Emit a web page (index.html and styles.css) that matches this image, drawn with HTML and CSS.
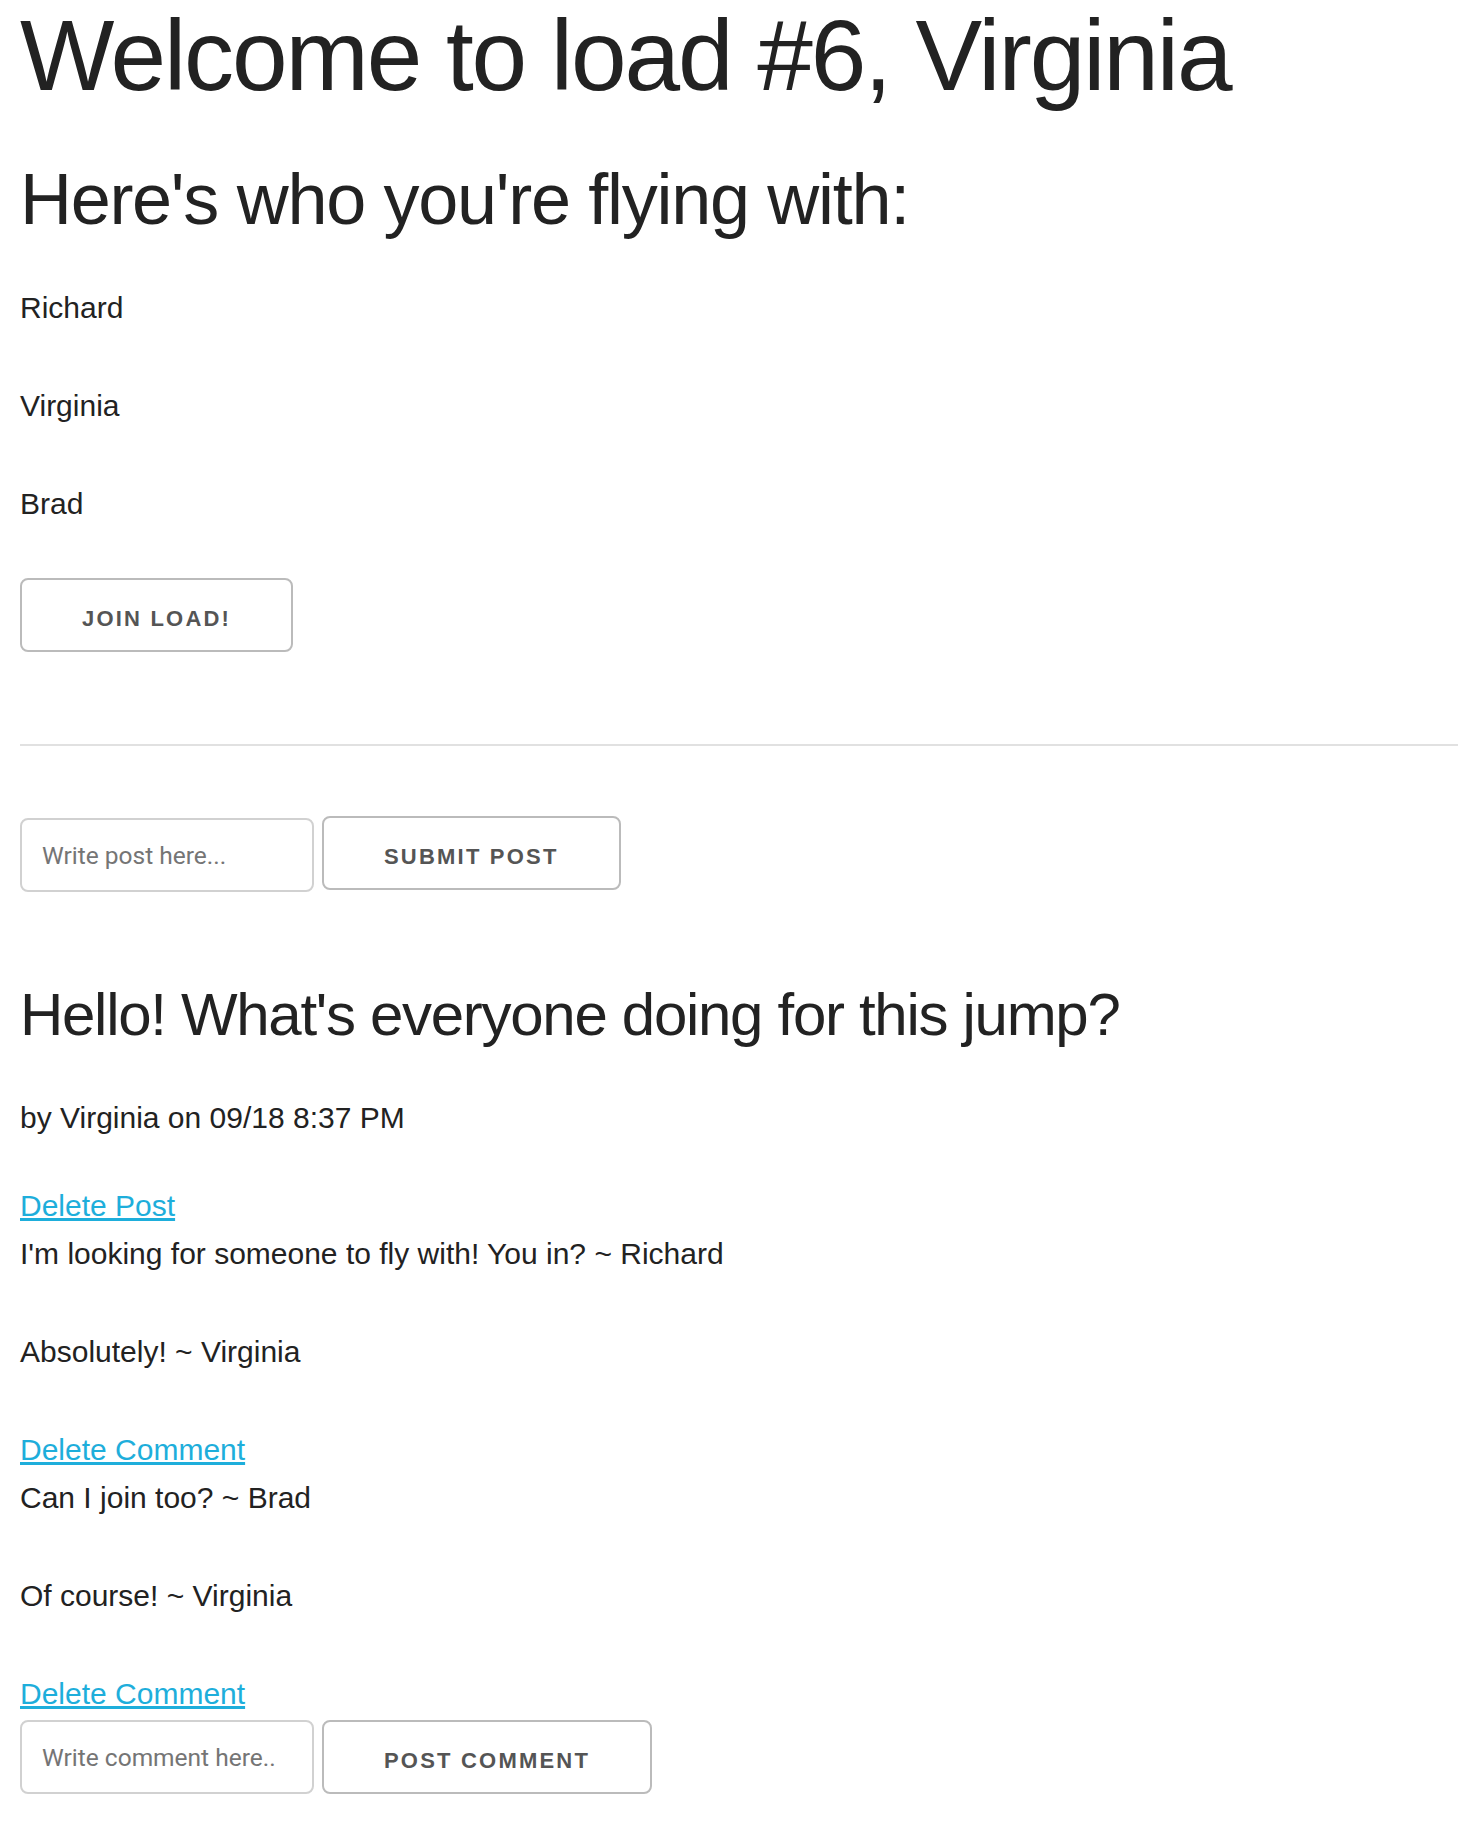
FILE: index.html
```html
<!DOCTYPE html>
<html lang="en">
<head>
<meta charset="utf-8">
<title>Load #6</title>
<link rel="stylesheet" href="styles.css">
</head>
<body>
<main class="page">
  <h1 class="title">Welcome to load #6, Virginia</h1>
  <h2 class="subtitle">Here's who you're flying with:</h2>
  <p class="text">Richard</p>
  <p class="text">Virginia</p>
  <p class="text">Brad</p>
  <form class="join-form">
    <button type="button" class="btn">Join load!</button>
  </form>
  <hr class="divider">
  <form class="row-form post-form">
    <input class="field field-offset" type="text" placeholder="Write post here...">
    <button type="button" class="btn">Submit post</button>
  </form>
  <section class="post">
    <h3 class="post-title">Hello! What's everyone doing for this jump?</h3>
    <p class="text post-meta">by Virginia on 09/18 8:37 PM</p>
    <div class="link-line"><a class="link" href="#">Delete Post</a></div>
    <p class="text">I'm looking for someone to fly with! You in? ~ Richard</p>
    <p class="text">Absolutely! ~ Virginia</p>
    <div class="link-line"><a class="link" href="#">Delete Comment</a></div>
    <p class="text">Can I join too? ~ Brad</p>
    <p class="text">Of course! ~ Virginia</p>
    <div class="link-line"><a class="link" href="#">Delete Comment</a></div>
    <form class="row-form comment-form">
      <input class="field" type="text" placeholder="Write comment here..">
      <button type="button" class="btn">Post comment</button>
    </form>
  </section>
</main>
</body>
</html>
```
FILE: styles.css
```css
html, body {
  margin: 0;
  padding: 0;
  background: #fff;
}

body {
  font-family: "Liberation Sans", Arial, Helvetica, sans-serif;
  color: #222;
}

.page {
  padding-left: 20px;
}

.title {
  font-size: 100px;
  line-height: 110px;
  font-weight: 400;
  letter-spacing: -2.1px;
  margin: 0 0 44px;
}

.subtitle {
  font-size: 72px;
  line-height: 90px;
  font-weight: 400;
  letter-spacing: -1.3px;
  margin: 0 0 40px;
}

.text {
  font-size: 30px;
  line-height: 48px;
  margin: 0 0 50px;
}

.join-form {
  margin: 0;
}

.btn {
  display: inline-block;
  box-sizing: border-box;
  height: 74px;
  padding: 7px 60px 0;
  margin: 0;
  border: 2px solid #bbb;
  border-radius: 8px;
  background: transparent;
  color: #555;
  font-family: "Liberation Sans", Arial, sans-serif;
  font-size: 22px;
  font-weight: 700;
  letter-spacing: 2.2px;
  text-transform: uppercase;
  line-height: 26px;
  white-space: nowrap;
  cursor: pointer;
}

.divider {
  border: 0;
  border-top: 2px solid #e1e1e1;
  height: 0;
  margin: 92px 0 70px;
}

.row-form {
  display: flex;
  align-items: flex-start;
  gap: 8px;
  margin: 0;
}

.post-form {
  margin-bottom: 84px;
}

.field {
  box-sizing: border-box;
  width: 294px;
  height: 74px;
  margin: 0;
  padding: 0 20px;
  border: 2px solid #d1d1d1;
  border-radius: 8px;
  background: #fff;
  color: #222;
  font-family: Roboto, "Liberation Sans", Arial, sans-serif;
  font-size: 24.5px;
  outline: none;
}

.field::placeholder {
  color: #757575;
}

.field-offset {
  margin-top: 2px;
}

.post-title {
  font-size: 60px;
  line-height: 78px;
  font-weight: 400;
  letter-spacing: -1.3px;
  margin: 0 0 40px;
}

.post-meta {
  margin-bottom: 40px;
}

.link-line {
  font-size: 30px;
  line-height: 48px;
}

.link {
  color: #1eaedb;
  text-decoration: underline;
}

.comment-form {
  margin-top: 2px;
}
```
